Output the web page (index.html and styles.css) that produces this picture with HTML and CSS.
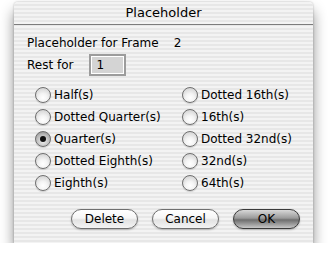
FILE: index.html
```html
<!DOCTYPE html>
<html lang="en">
<head>
    <meta charset="UTF-8">
    <title>Placeholder</title>
    <link rel="stylesheet" href="styles.css">
</head>
<body>
    <div class="window">
        <div class="titlebar">Placeholder</div>

        <div class="content">
            <div class="row frame-row">
                <span>Placeholder for Frame</span>
                <span class="frame-num">2</span>
            </div>

            <div class="row rest-row">
                <span>Rest for</span>
                <span class="field">1</span>
            </div>

            <div class="radios">
                <label class="radio"><span class="dot"></span>Half(s)</label>
                <label class="radio"><span class="dot"></span>Dotted 16th(s)</label>
                <label class="radio"><span class="dot"></span>Dotted Quarter(s)</label>
                <label class="radio"><span class="dot"></span>16th(s)</label>
                <label class="radio checked"><span class="dot"></span>Quarter(s)</label>
                <label class="radio"><span class="dot"></span>Dotted 32nd(s)</label>
                <label class="radio"><span class="dot"></span>Dotted Eighth(s)</label>
                <label class="radio"><span class="dot"></span>32nd(s)</label>
                <label class="radio"><span class="dot"></span>Eighth(s)</label>
                <label class="radio"><span class="dot"></span>64th(s)</label>
            </div>

            <div class="buttons">
                <button class="btn">Delete</button>
                <button class="btn">Cancel</button>
                <button class="btn default">OK</button>
            </div>
        </div>
    </div>
</body>
</html>
```

FILE: styles.css
```css
body {
    margin: 0;
    padding: 0;
    background: #fff;
    font-family: "DejaVu Sans", sans-serif;
    font-size: 12px;
    color: #000;
}

.window {
    margin: 2px 0 0 14px;
    width: 299px;
    height: 241px;
    background: repeating-linear-gradient(to bottom, #f3f3f3 0, #f3f3f3 2px, #e7e7e7 2px, #e7e7e7 4px);
    border-radius: 4px 4px 0 0;
    box-shadow: 0 9px 14px rgba(0, 0, 0, 0.45), 0 0 2px rgba(0, 0, 0, 0.3);
}

.titlebar {
    height: 22px;
    line-height: 22px;
    text-align: center;
    font-size: 13px;
    border-bottom: 1px solid #7c7c7c;
    border-radius: 4px 4px 0 0;
}

.content {
    padding: 0 0 0 13px;
}

.row {
    display: flex;
    align-items: center;
}

.frame-row {
    height: 16px;
    margin-top: 10px;
}

.frame-num {
    margin-left: 15px;
}

.rest-row {
    height: 22px;
    margin-top: 3px;
}

.field {
    margin-left: 16px;
    width: 28px;
    height: 18px;
    line-height: 18px;
    padding-left: 5px;
    background: #d4d4d4;
    border: 2px solid #9c9c9c;
    box-shadow: inset 0 0 0 1px #fff;
}

.radios {
    display: grid;
    grid-template-columns: 147px 140px;
    grid-auto-rows: 22px;
    margin-top: 8px;
    padding-left: 8px;
}

.radio {
    display: flex;
    align-items: center;
}

.dot {
    width: 14px;
    height: 14px;
    border: 1px solid #6e6e6e;
    border-radius: 50%;
    margin-right: 3px;
    background: radial-gradient(circle at 50% 70%, #ffffff 0, #f4f4f4 35%, #c8c8c8 100%);
    box-shadow: 0 1px 1px rgba(0, 0, 0, 0.15);
    position: relative;
}

.checked .dot {
    background: radial-gradient(circle at 50% 65%, #f0f0f0 0, #b8b8b8 60%, #7a7a7a 100%);
}

.checked .dot::after {
    content: "";
    position: absolute;
    left: 4px;
    top: 4px;
    width: 6px;
    height: 6px;
    border-radius: 50%;
    background: #111;
}

.buttons {
    display: flex;
    justify-content: flex-end;
    gap: 14px;
    margin-top: 15px;
    padding-right: 13px;
}

.btn {
    width: 67px;
    height: 20px;
    border: 1px solid #6f6f6f;
    border-radius: 10px;
    font-family: "DejaVu Sans", sans-serif;
    font-size: 12px;
    color: #000;
    padding: 0;
    background: linear-gradient(to bottom, #ffffff 0, #f6f6f6 45%, #e2e2e2 55%, #f4f4f4 100%);
    box-shadow: 0 1px 2px rgba(0, 0, 0, 0.25);
}

.btn.default {
    border-color: #3a3a3a;
    background: linear-gradient(to bottom, #d8d8d8 0, #9a9a9a 45%, #6e6e6e 55%, #a8a8a8 85%, #c8c8c8 100%);
}
```
